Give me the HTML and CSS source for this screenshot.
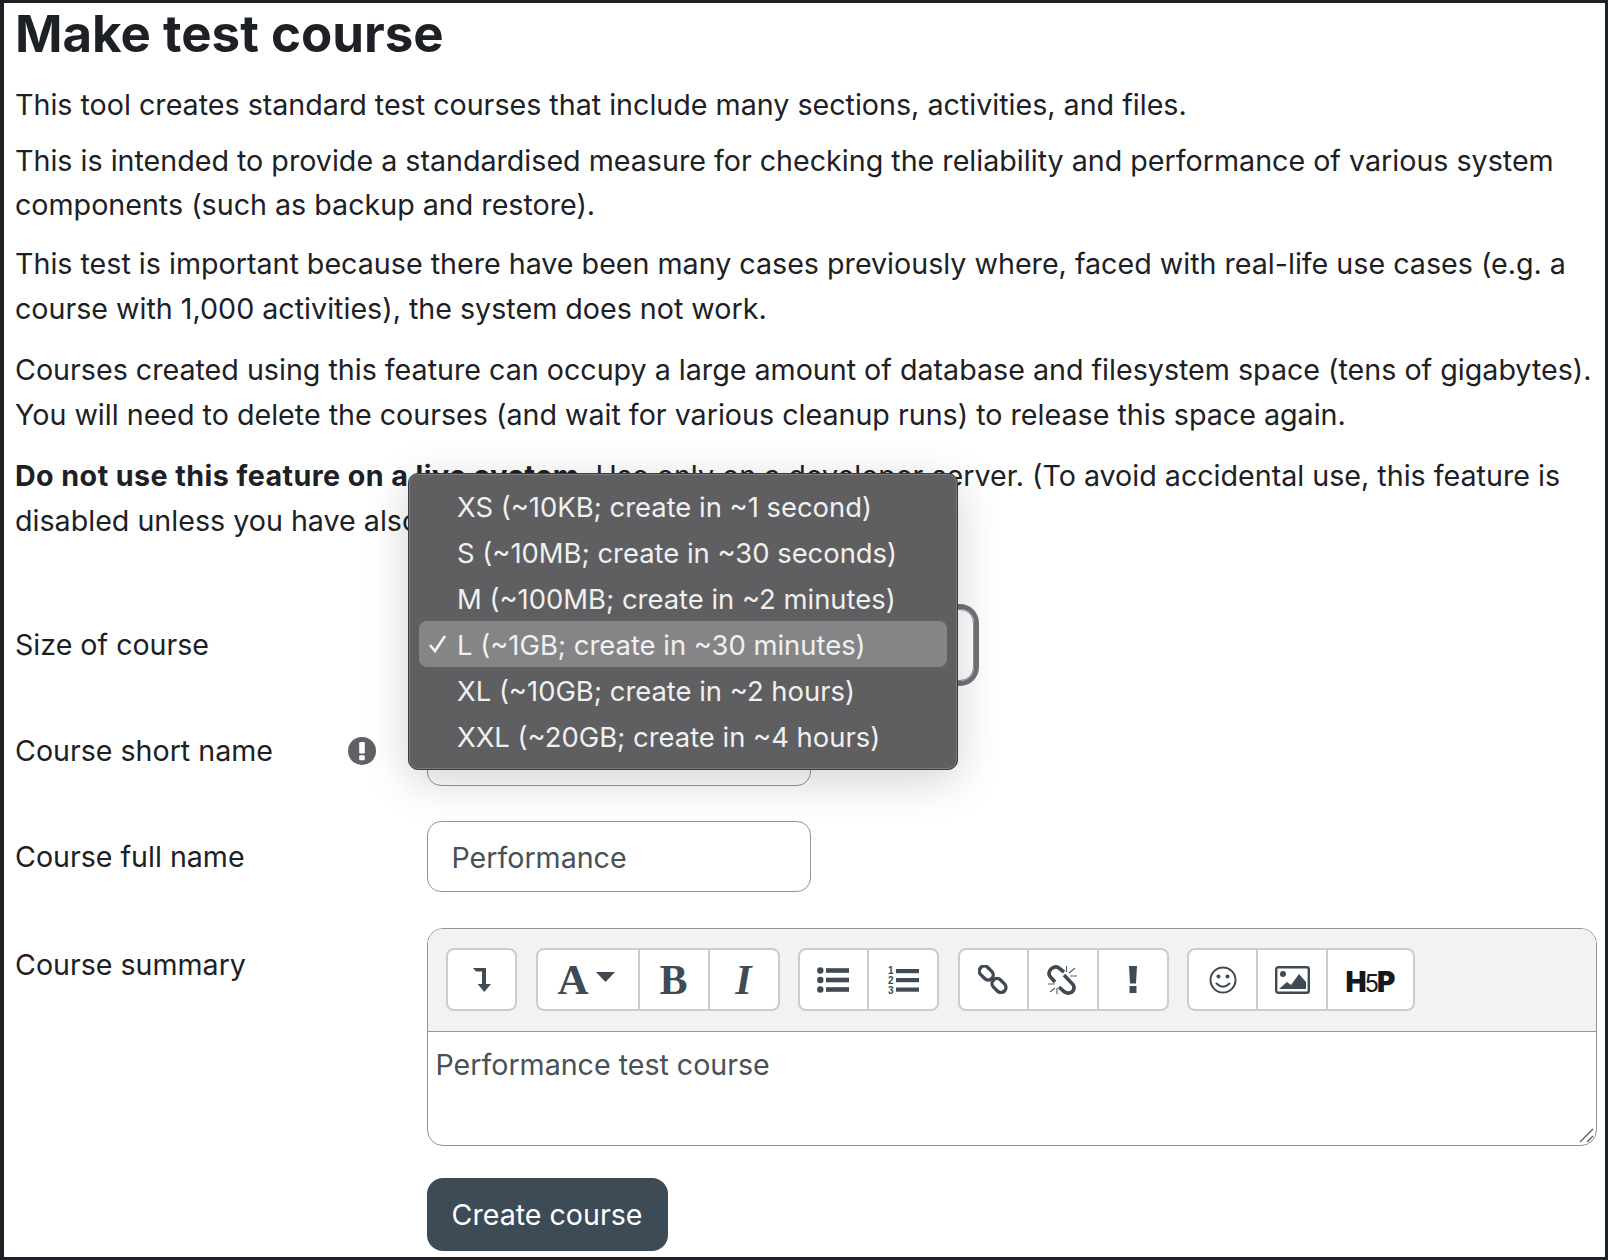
FILE: index.html
```html
<!DOCTYPE html>
<html lang="en">
<head>
<meta charset="utf-8">
<title>Make test course</title>
<link rel="stylesheet" href="styles.css">
</head>
<body>
<main class="page">
  <h1 class="title">Make test course</h1>
  <p class="para para-first">This tool creates standard test courses that include many sections, activities, and files.</p>
  <p class="para para-tight">This is intended to provide a standardised measure for checking the reliability and performance of various system components (such as backup and restore).</p>
  <p class="para">This test is important because there have been many cases previously where, faced with real-life use cases (e.g. a course with 1,000 activities), the system does not work.</p>
  <p class="para para-loose">Courses created using this feature can occupy a large amount of database and filesystem space (tens of gigabytes). You will need to delete the courses (and wait for various cleanup runs) to release this space again.</p>
  <p class="para para-loose"><strong>Do not use this feature on a live system</strong>. Use only on a developer server. (To avoid accidental use, this feature is disabled unless you have also set debugging to DEVELOPER.)</p>

  <form class="form">
    <div class="row row-select">
      <label class="label label-input">Size of course</label>
      <div class="select"></div>
    </div>
    <div class="row">
      <label class="label label-input">Course short name
        <svg class="req" viewBox="0 0 28 28"><circle cx="14" cy="14" r="14" fill="#5f6164"/><rect x="11.200" y="5" width="5.600" height="11.500" rx="1.200" fill="#fff"/><rect x="11.200" y="18.300" width="5.600" height="5" rx="1.200" fill="#fff"/></svg>
      </label>
      <input class="input" type="text" value="">
    </div>
    <div class="row">
      <label class="label label-input">Course full name</label>
      <input class="input" type="text" value="Performance">
    </div>
    <div class="row row-editor">
      <label class="label">Course summary</label>
      <div class="editor">
        <div class="toolbar">
          <div class="group">
            <span class="tool"><svg width="18" height="24" viewBox="0 0 18 24"><path d="M0 0H13V16H18L11.300 24 4.700 16H9V3.500H3z" fill="#3f4a54"/></svg></span>
          </div>
          <div class="group">
            <span class="tool tool-wide"><span class="glyph glyph-a">A</span><svg class="caret" width="19" height="10" viewBox="0 0 19 10"><path d="M0 0h19L9.500 10z" fill="#3f4a54"/></svg></span>
            <span class="tool"><span class="glyph">B</span></span>
            <span class="tool"><span class="glyph glyph-i">I</span></span>
          </div>
          <div class="group">
            <span class="tool"><svg width="33" height="26" viewBox="0 0 33 26"><g fill="#3f4a54"><circle cx="3.300" cy="3.500" r="3.200"/><circle cx="3.300" cy="13" r="3.200"/><circle cx="3.300" cy="22.500" r="3.200"/><rect x="9" y="1.200" width="23" height="4.600"/><rect x="9" y="10.700" width="23" height="4.600"/><rect x="9" y="20.200" width="23" height="4.600"/></g></svg></span>
            <span class="tool"><svg width="33" height="30" viewBox="0 0 33 30"><g fill="#3f4a54"><rect x="9" y="4" width="23" height="4.200"/><rect x="9" y="13" width="23" height="4.200"/><rect x="9" y="22.500" width="23" height="4.200"/></g><g fill="#3f4a54" font-family="Liberation Sans, sans-serif" font-weight="700" font-size="10"><text x="1" y="9">1</text><text x="1" y="19">2</text><text x="1" y="29">3</text></g></svg></span>
          </div>
          <div class="group">
            <span class="tool"><svg width="30" height="29" viewBox="0 0 30 29"><g fill="none" stroke="#3f4a54" stroke-width="3.400"><rect x="0.500" y="3" width="15.500" height="10" rx="5" transform="rotate(45 8.250 8)"/><rect x="13.250" y="15.500" width="15.500" height="10" rx="5" transform="rotate(45 21 20.500)"/></g></svg></span>
            <span class="tool"><svg width="31" height="30" viewBox="0 0 31 30"><g fill="none" stroke="#3f4a54" stroke-width="3.600"><path d="M17 7 12 3Q8 0.500 4 4 0.500 7.500 3 11.500L8 17"/><path d="M17 10 26 19.500Q28.500 23.500 25 27 21 29.500 17 26.500L12 22"/></g><g stroke="#5a646d" stroke-width="1.200"><path d="M19.500 1V7M28 3 22 8M30 11H23M1 19H8M3 27 8 23M10 23V29"/></g></svg></span>
            <span class="tool"><svg width="10" height="27" viewBox="0 0 10 27"><path d="M1 0h8L8 17.500H2zM1.500 20h7v7h-7z" fill="#3f4a54"/></svg></span>
          </div>
          <div class="group">
            <span class="tool"><svg width="28" height="28" viewBox="0 0 28 28"><g fill="none" stroke="#3f4a54" stroke-width="2"><circle cx="14" cy="14" r="12.500"/><path d="M7.500 17.500Q14 24 20.500 17.500" stroke-linecap="round"/></g><circle cx="9.500" cy="10.500" r="2" fill="#3f4a54"/><circle cx="18.500" cy="10.500" r="2" fill="#3f4a54"/></svg></span>
            <span class="tool"><svg width="35" height="28" viewBox="0 0 35 28"><rect x="1.200" y="1.200" width="32.600" height="25.600" rx="2" fill="#fff" stroke="#3f4a54" stroke-width="2.400"/><circle cx="8" cy="8" r="3" fill="#3f4a54"/><path d="M4 23l8-7 4 3 8-11 7 8v7z" fill="#3f4a54"/></svg></span>
            <span class="tool tool-h5p"><span class="h5p">H<span class="h5p-five">5</span>P</span></span>
          </div>
        </div>
        <div class="editor-body">Performance test course
          <svg class="grip" width="18" height="18" viewBox="0 0 18 18"><path d="M2 15 15 2M9 15l6-6" stroke="#555" stroke-width="1.200" fill="none"/></svg>
        </div>
      </div>
    </div>
    <div class="row row-submit">
      <span class="label"></span>
      <button class="button" type="button">Create course</button>
    </div>
  </form>

  <div class="menu">
    <div class="item">XS (~10KB; create in ~1 second)</div>
    <div class="item">S (~10MB; create in ~30 seconds)</div>
    <div class="item">M (~100MB; create in ~2 minutes)</div>
    <div class="item item-active"><svg class="check" width="22" height="22" viewBox="0 0 22 22"><path d="M3 12l5 6L18 3" fill="none" stroke="#f2f2f2" stroke-width="2.600"/></svg>L (~1GB; create in ~30 minutes)</div>
    <div class="item">XL (~10GB; create in ~2 hours)</div>
    <div class="item">XXL (~20GB; create in ~4 hours)</div>
  </div>
</main>
</body>
</html>
```
FILE: styles.css
```css
* { box-sizing: border-box; }
html, body { margin: 0; padding: 0; background: #fff; }
body {
  width: 1608px;
  height: 1260px;
  overflow: hidden;
  font-family: Inter, "Liberation Sans", sans-serif;
  color: #1d2125;
}
.page {
  position: relative;
  width: 1608px;
  height: 1260px;
  overflow: hidden;
  border: solid #1d2125;
  border-width: 3px 3px 3px 4px;
  padding: 1px 4px 0 11px;
  font-size: 28.650px;
  line-height: 45px;
}
.title {
  margin: 0;
  font-size: 51px;
  line-height: 60px;
  font-weight: 700;
}
.para { margin: 14px 0 0; }
.para strong { letter-spacing: 0.440px; }
.para-first { margin-top: 19px; line-height: 44px; }
.para-tight { margin-top: 12px; line-height: 44px; }
.para-loose { margin-top: 16px; }
.form { margin-top: 66px; display: flex; flex-direction: column; gap: 35px; }
.row { display: flex; align-items: flex-start; }
.row-select { margin-bottom: -1px; }
.row-editor { margin-top: 1px; }
.row-submit { margin-top: -3px; }
.label {
  flex: 0 0 411.500px;
  display: flex;
  align-items: center;
  justify-content: space-between;
  padding: 15px 50.500px 0 0;
  font-size: 28.600px;
  line-height: 44px;
}
.label-input { padding-top: 14px; }
.req { width: 28px; height: 28px; }
.select {
  width: 547.500px;
  height: 72px;
  border: 1px solid #8f959e;
  border-radius: 14px;
  box-shadow: 0 0 0 5px #6f7276;
}
.input {
  width: 384px;
  height: 71px;
  border: 1px solid #8f959e;
  border-radius: 14px;
  padding: 1px 24px 0;
  font: 28.600px Inter, "Liberation Sans", sans-serif;
  color: #495057;
  background: #fff;
}
.editor {
  flex: 0 0 1170.500px;
  border: 1.500px solid #8f959e;
  border-radius: 16px;
  overflow: hidden;
}
.toolbar {
  display: flex;
  gap: 18.500px;
  height: 103px;
  padding: 19px 18.500px;
  background: #f2f2f2;
  border-bottom: 1.500px solid #999;
}
.group {
  display: flex;
  height: 63px;
  background: #fff;
  border: 2px solid #ccc;
  border-radius: 8px;
}
.tool {
  display: flex;
  align-items: center;
  justify-content: center;
  width: 67px;
  height: 100%;
}
.tool + .tool { width: 70px; border-left: 2px solid #ccc; }
.tool-wide { width: 100px; gap: 7px; padding-right: 3px; }
.tool + .tool-h5p { width: 87px; }
.glyph {
  font: 700 42px/1 "Liberation Serif", serif;
  color: #3f4a54;
}
.glyph-a { font-size: 43px; }
.glyph-i { font-style: italic; }
.caret { margin-top: -6px; }
.h5p {
  font: 900 28px/1 Inter, sans-serif;
  color: #16191c;
  margin-top: 4px;
}
.h5p-five { font-size: 24px; font-weight: 400; margin: 0 -2px; }
.editor-body {
  position: relative;
  height: 113px;
  padding: 11px 8px;
  font-size: 28.600px;
  line-height: 44px;
  color: #495057;
}
.grip { position: absolute; right: 0; bottom: 0; }
.button {
  width: 241px;
  height: 73px;
  border: 0;
  border-radius: 16px;
  background: #3d4b57;
  color: #fff;
  font: 28.600px Inter, "Liberation Sans", sans-serif;
}
.menu {
  position: absolute;
  left: 404px;
  top: 470px;
  width: 550px;
  height: 297px;
  padding: 9px 10px 9px;
  background: #5f5f61;
  border: 1px solid #3a3a3c;
  border-radius: 10px;
  box-shadow: inset 0 0 0 1px #7c7c7e, 0 10px 44px rgba(0, 0, 0, 0.18);
}
.item {
  position: relative;
  height: 46px;
  padding-left: 38px;
  font-size: 27.400px;
  line-height: 48px;
  color: #f0f0f0;
  white-space: nowrap;
}
.item-active { background: #858587; border-radius: 8px; }
.check { position: absolute; left: 8px; top: 12px; }
```
